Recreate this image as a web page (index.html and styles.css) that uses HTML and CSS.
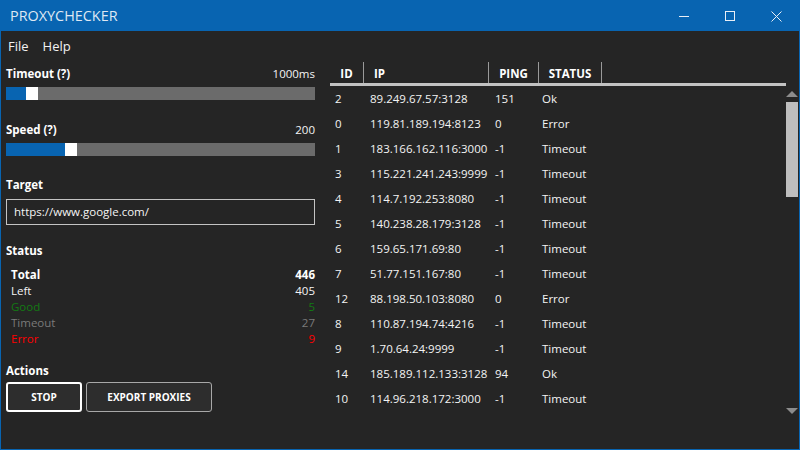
FILE: index.html
```html
<!DOCTYPE html>
<html lang="en">
<head>
<meta charset="utf-8">
<title>PROXYCHECKER</title>
<link rel="stylesheet" href="styles.css">
</head>
<body>
<div class="window">
  <div class="titlebar">
    <div class="title">PROXYCHECKER</div>
    <div class="caption-btns">
      <div class="cap-btn"><svg width="10" height="10" viewBox="0 0 10 10"><path d="M0 5.5H10" stroke="#e8eef6" stroke-width="1"/></svg></div>
      <div class="cap-btn"><svg width="10" height="10" viewBox="0 0 10 10"><rect x="0.5" y="0.5" width="9" height="9" fill="none" stroke="#e8eef6" stroke-width="1"/></svg></div>
      <div class="cap-btn"><svg width="11" height="11" viewBox="0 0 11 11"><path d="M0.5 0.5L10.5 10.5M10.5 0.5L0.5 10.5" stroke="#e8eef6" stroke-width="1"/></svg></div>
    </div>
  </div>
  <div class="menu">
    <span class="menu-item">File</span>
    <span class="menu-item">Help</span>
  </div>
  <div class="content">
    <div class="left">
      <div class="head"><span class="label">Timeout (?)</span><span class="val">1000ms</span></div>
      <div class="slider"><div class="fill" style="width:20px"></div><div class="knob"></div></div>

      <div class="head gap21"><span class="label">Speed (?)</span><span class="val">200</span></div>
      <div class="slider"><div class="fill" style="width:59px"></div><div class="knob"></div></div>

      <div class="head gap20"><span class="label">Target</span></div>
      <div class="input">https://www.google.com/</div>

      <div class="head gap17"><span class="label">Status</span></div>
      <div class="stats">
        <div class="stat bold"><span>Total</span><span>446</span></div>
        <div class="stat"><span>Left</span><span>405</span></div>
        <div class="stat good"><span>Good</span><span>5</span></div>
        <div class="stat timeout"><span>Timeout</span><span>27</span></div>
        <div class="stat error"><span>Error</span><span>9</span></div>
      </div>

      <div class="head gap15"><span class="label">Actions</span></div>
      <div class="actions">
        <button class="btn btn-primary">STOP</button>
        <button class="btn btn-export">EXPORT PROXIES</button>
      </div>
    </div>
    <div class="right">
      <div class="table">
        <div class="thead">
          <div class="th center">ID</div>
          <div class="th ip">IP</div>
          <div class="th center">PING</div>
          <div class="th center">STATUS</div>
          <div class="th filler"></div>
        </div>
        <div class="tbody">
          <div class="tr"><span class="c-id">2</span><span class="c-ip">89.249.67.57:3128</span><span class="c-ping">151</span><span class="c-st">Ok</span></div>
          <div class="tr"><span class="c-id">0</span><span class="c-ip">119.81.189.194:8123</span><span class="c-ping">0</span><span class="c-st">Error</span></div>
          <div class="tr"><span class="c-id">1</span><span class="c-ip">183.166.162.116:3000</span><span class="c-ping">-1</span><span class="c-st">Timeout</span></div>
          <div class="tr"><span class="c-id">3</span><span class="c-ip">115.221.241.243:9999</span><span class="c-ping">-1</span><span class="c-st">Timeout</span></div>
          <div class="tr"><span class="c-id">4</span><span class="c-ip">114.7.192.253:8080</span><span class="c-ping">-1</span><span class="c-st">Timeout</span></div>
          <div class="tr"><span class="c-id">5</span><span class="c-ip">140.238.28.179:3128</span><span class="c-ping">-1</span><span class="c-st">Timeout</span></div>
          <div class="tr"><span class="c-id">6</span><span class="c-ip">159.65.171.69:80</span><span class="c-ping">-1</span><span class="c-st">Timeout</span></div>
          <div class="tr"><span class="c-id">7</span><span class="c-ip">51.77.151.167:80</span><span class="c-ping">-1</span><span class="c-st">Timeout</span></div>
          <div class="tr"><span class="c-id">12</span><span class="c-ip">88.198.50.103:8080</span><span class="c-ping">0</span><span class="c-st">Error</span></div>
          <div class="tr"><span class="c-id">8</span><span class="c-ip">110.87.194.74:4216</span><span class="c-ping">-1</span><span class="c-st">Timeout</span></div>
          <div class="tr"><span class="c-id">9</span><span class="c-ip">1.70.64.24:9999</span><span class="c-ping">-1</span><span class="c-st">Timeout</span></div>
          <div class="tr"><span class="c-id">14</span><span class="c-ip">185.189.112.133:3128</span><span class="c-ping">94</span><span class="c-st">Ok</span></div>
          <div class="tr"><span class="c-id">10</span><span class="c-ip">114.96.218.172:3000</span><span class="c-ping">-1</span><span class="c-st">Timeout</span></div>
        </div>
      </div>
      <div class="scrollbar">
        <div class="sb-btn"><div class="arrow-up"></div></div>
        <div class="sb-thumb"></div>
        <div class="sb-track"></div>
        <div class="sb-btn"><div class="arrow-down"></div></div>
      </div>
    </div>
  </div>
</div>
</body>
</html>
```

FILE: styles.css
```css
* { box-sizing: border-box; }
html, body { margin: 0; padding: 0; }
body {
  background: #252525;
  font-family: "Open Sans", "Noto Sans", sans-serif;
  font-size: 11.5px;
  color: #f4f4f4;
}
.window {
  width: 800px;
  height: 450px;
  border: 1px solid #0864b1;
  background: #252525;
  display: flex;
  flex-direction: column;
  overflow: hidden;
}
.titlebar {
  height: 30px;
  flex: 0 0 30px;
  background: #0864b1;
  display: flex;
  align-items: center;
  justify-content: space-between;
}
.title {
  padding-left: 9px;
  font-size: 14.4px;
  line-height: 30px;
  color: #dfe8f3;
  letter-spacing: 0;
}
.caption-btns { display: flex; height: 30px; }
.cap-btn {
  width: 46px;
  height: 30px;
  display: flex;
  align-items: center;
  justify-content: center;
}
.menu {
  height: 30px;
  flex: 0 0 30px;
  display: flex;
  align-items: center;
  padding-left: 0;
}
.menu-item {
  font-size: 13px;
  line-height: 30px;
  padding: 0 7px;
  color: #f2f2f2;
}
.content {
  flex: 1;
  display: flex;
  min-height: 0;
}
.left {
  width: 319px;
  flex: 0 0 319px;
  padding: 4px 5px 0 5px;
  display: flex;
  flex-direction: column;
}
.head {
  height: 18px;
  line-height: 18px;
  display: flex;
  justify-content: space-between;
}
.label { font-weight: 700; color: #ffffff; }
.val { color: #f4f4f4; }
.gap21 { margin-top: 21px; }
.gap20 { margin-top: 20px; }
.gap17 { margin-top: 17px; }
.gap15 { margin-top: 15px; }
.slider {
  margin-top: 4px;
  height: 13px;
  background: #6b6b6b;
  display: flex;
}
.fill { background: #0864b1; height: 13px; }
.knob { width: 12px; height: 13px; background: #ffffff; }
.input {
  margin-top: 5px;
  height: 26px;
  border: 1px solid #c4c4c4;
  padding-left: 7px;
  line-height: 24px;
  color: #f4f4f4;
}
.stats {
  margin-top: 7px;
  padding-left: 5px;
  display: flex;
  flex-direction: column;
}
.stat {
  height: 16px;
  line-height: 16px;
  display: flex;
  justify-content: space-between;
}
.stat.bold { font-weight: 700; color: #ffffff; }
.stat.good { color: #137a13; }
.stat.timeout { color: #7a7a7a; }
.stat.error { color: #ff0000; }
.actions {
  margin-top: 2px;
  display: flex;
  gap: 4px;
}
.btn {
  height: 30px;
  background: #2d2d2d;
  color: #ffffff;
  font-family: "Open Sans", "Noto Sans", sans-serif;
  font-weight: 700;
  font-size: 10px;
  border-radius: 3px;
  padding: 0;
}
.btn-primary { width: 76px; border: 2px solid #ffffff; }
.btn-export { width: 126px; border: 1px solid #a8a8a8; }
.right {
  flex: 1;
  display: flex;
  padding: 1px 1px 0 10px;
  min-width: 0;
}
.table {
  width: 456px;
  flex: 0 0 456px;
  display: flex;
  flex-direction: column;
}
.thead {
  display: grid;
  grid-template-columns: 34px 125px 50px 63px 1fr;
  border-bottom: 3px solid #c2c2c2;
}
.th {
  height: 21px;
  line-height: 21px;
  padding-top: 1px;
  font-weight: 700;
  color: #ffffff;
  border-right: 1px solid #9a9a9a;
}
.th.center { text-align: center; }
.th.ip { padding-left: 10px; }
.th.filler { border-right: none; }
.tbody {
  height: 333px;
  overflow: hidden;
}
.tr {
  display: grid;
  grid-template-columns: 34px 125px 50px 63px 1fr;
  height: 25px;
  line-height: 25px;
  color: #f4f4f4;
}
.c-id { padding-left: 5px; }
.c-ip { padding-left: 6px; }
.c-ping { padding-left: 6px; }
.c-st { padding-left: 3px; }
.scrollbar {
  width: 12px;
  margin-top: 24px;
  height: 333px;
  display: flex;
  flex-direction: column;
}
.sb-btn {
  height: 16px;
  flex: 0 0 16px;
  display: flex;
  justify-content: center;
  align-items: center;
}
.arrow-up {
  width: 0; height: 0;
  border-left: 6px solid transparent;
  border-right: 6px solid transparent;
  border-bottom: 6px solid #8c8c8c;
}
.arrow-down {
  width: 0; height: 0;
  border-left: 6px solid transparent;
  border-right: 6px solid transparent;
  border-top: 6px solid #8c8c8c;
}
.sb-thumb {
  height: 95px;
  flex: 0 0 95px;
  background: #bebebe;
}
.sb-track { flex: 1; }
```
